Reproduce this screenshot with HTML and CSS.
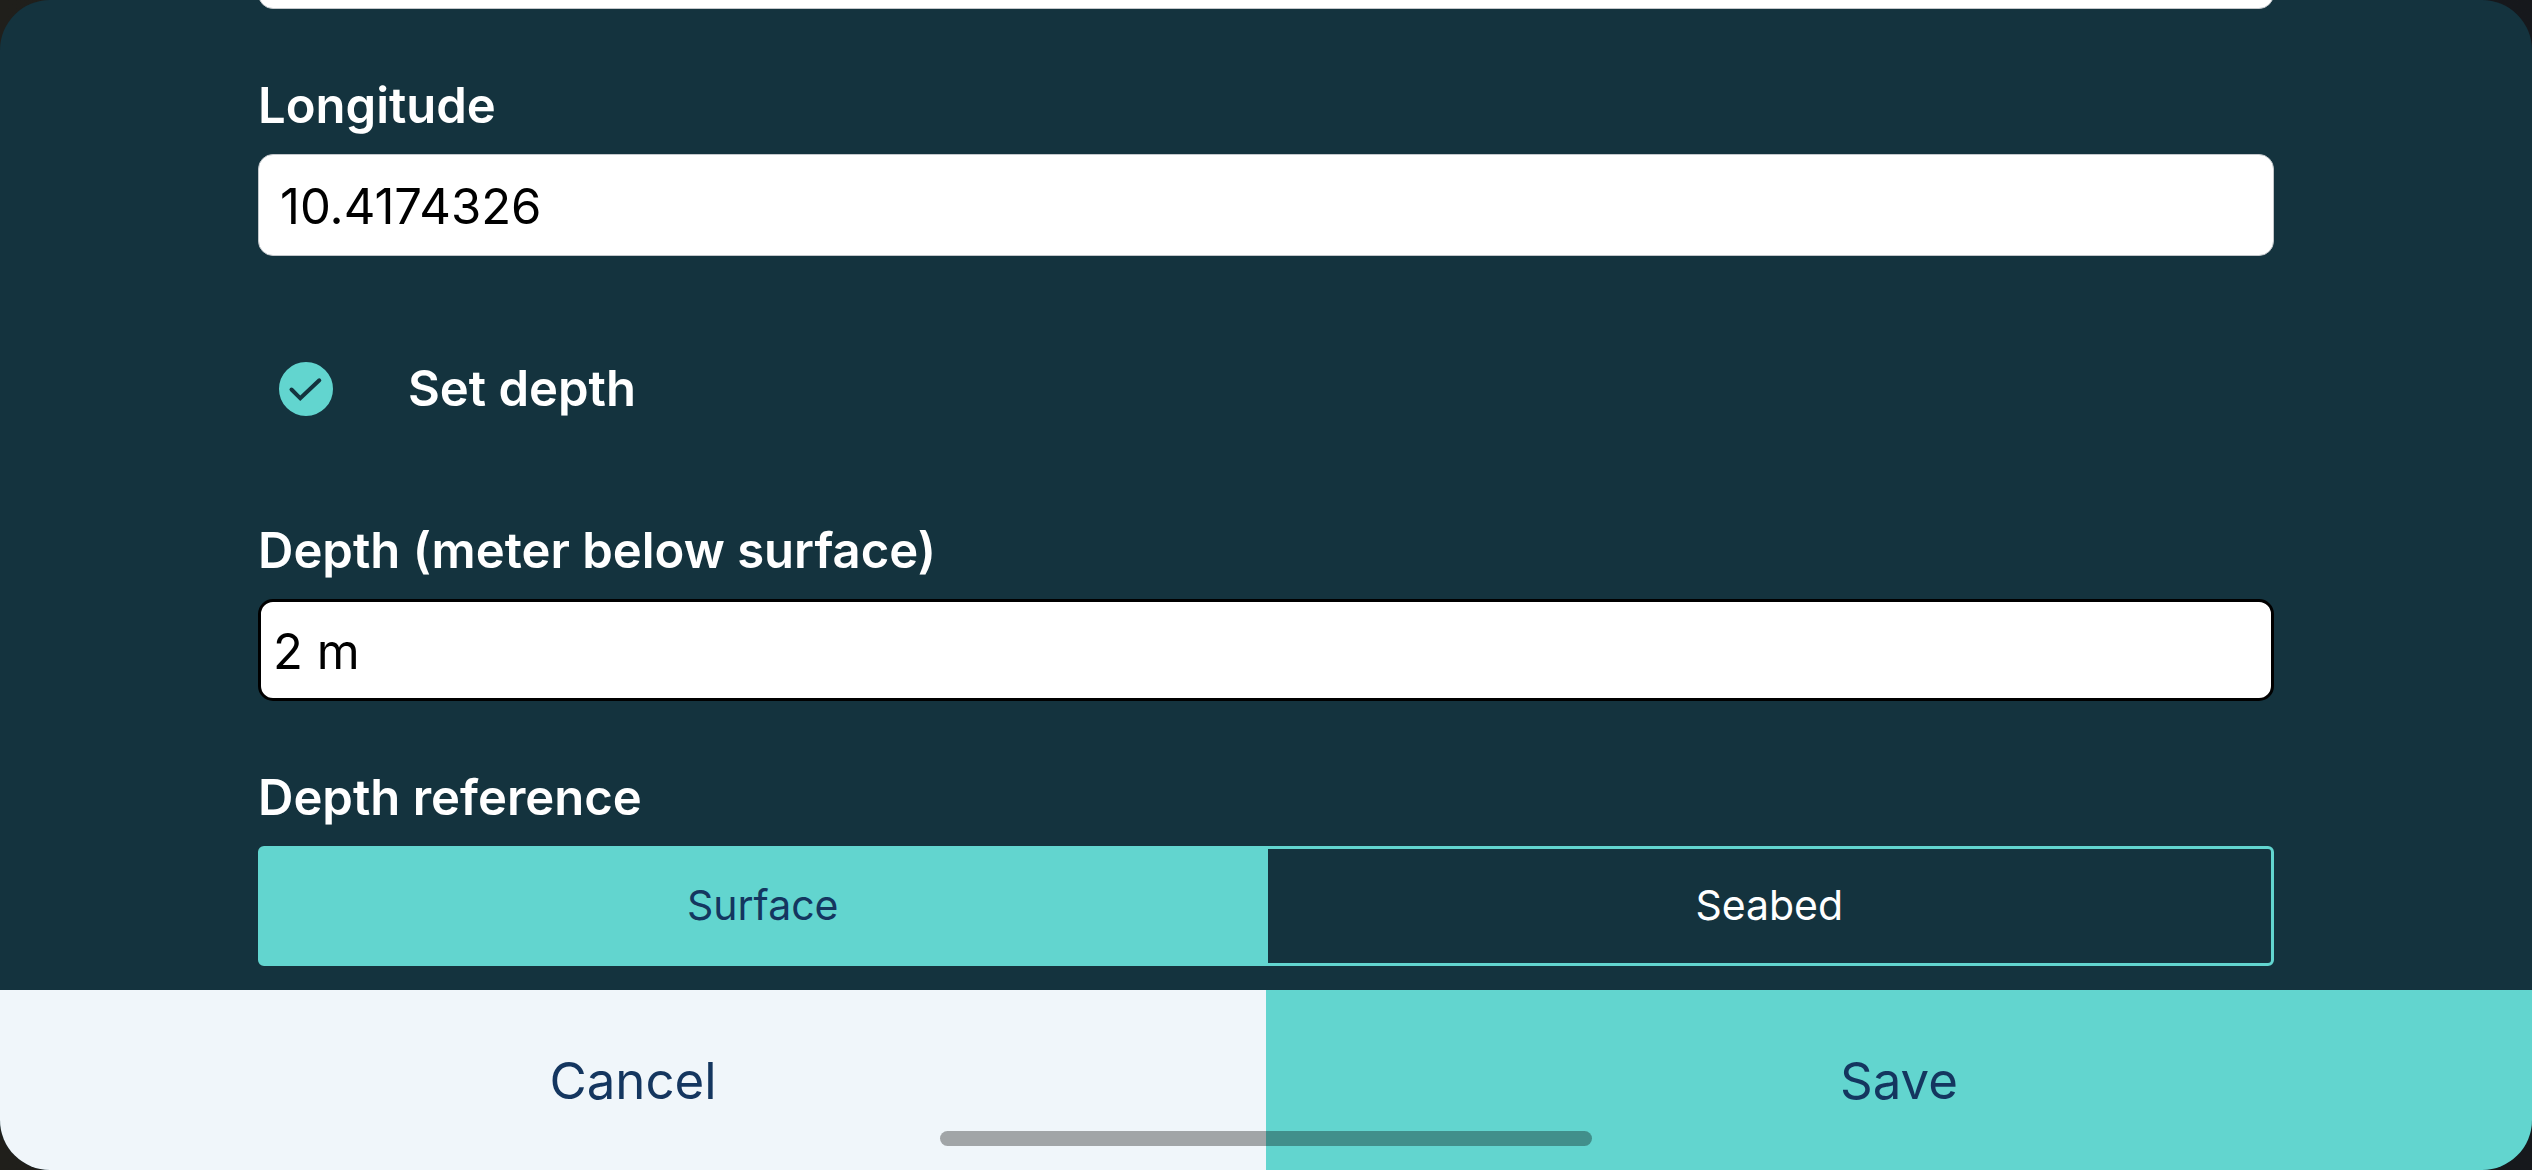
FILE: index.html
```html
<!DOCTYPE html>
<html lang="en">
<head>
    <meta charset="UTF-8">
    <meta name="viewport" content="width=device-width, initial-scale=1.0">
    <title>Position</title>
    <link rel="stylesheet" href="styles.css">
</head>
<body>

<form class="screen">
    <div class="content">
        <div class="field">
            <input type="text" id="latitude" class="text-input" aria-label="Latitude">
        </div>

        <div class="field">
            <label class="label" for="longitude">Longitude</label>
            <input type="text" id="longitude" class="text-input" value="10.4174326">
        </div>

        <div class="field check-row">
            <span class="check">
                <input type="checkbox" id="set-depth" class="check-input" checked>
                <svg class="check-icon" viewBox="0 0 54 54" aria-hidden="true">
                    <path d="M12.5 27.5 L21.3 36.3 L40.3 18.3"/>
                </svg>
            </span>
            <label class="label" for="set-depth">Set depth</label>
        </div>

        <div class="field">
            <label class="label" for="depth">Depth (meter below surface)</label>
            <input type="text" id="depth" class="text-input outlined" value="2 m">
        </div>

        <div class="field" role="radiogroup" aria-labelledby="reference-label">
            <span class="label" id="reference-label">Depth reference</span>
            <div class="segments">
                <label class="segment">
                    <input type="radio" name="reference" class="segment-input" checked>
                    <span>Surface</span>
                </label>
                <label class="segment">
                    <input type="radio" name="reference" class="segment-input">
                    <span>Seabed</span>
                </label>
            </div>
        </div>
    </div>

    <div class="actions">
        <button type="button" class="action cancel">Cancel</button>
        <button type="submit" class="action save">Save</button>
        <div class="home-indicator"></div>
    </div>
</form>

</body>
</html>
```
FILE: styles.css
```css
* {
    box-sizing: border-box;
}
body {
    margin: 0;
    background: linear-gradient(90deg, #201f1b, #16181c);
    font-family: Inter, "Liberation Sans", sans-serif;
}
.screen {
    display: flex;
    flex-direction: column;
    height: 100vh;
    border-radius: 50px;
    background-color: #14333e;
    overflow: hidden;
}

/* scrolled to the end, so the fields sit against the action bar */
.content {
    flex: 1;
    min-height: 0;
    display: flex;
    flex-direction: column;
    justify-content: flex-end;
    gap: 67px;
    padding: 0 258px 24px;
    overflow: hidden;
}
.field {
    display: flex;
    flex-direction: column;
    flex-shrink: 0;
    gap: 18px;
}
.label {
    color: white;
    font-size: 49px;
    font-weight: 600;
    line-height: 60px;
}
.text-input {
    width: 100%;
    height: 102px;
    padding: 2px 21px 0;
    border: 1px solid #c3c7cb;
    border-radius: 15px;
    background-color: white;
    color: black;
    font-family: inherit;
    font-size: 49px;
}
.text-input.outlined {
    padding: 2px 12px 0;
    border: 3px solid black;
}

.check-row {
    flex-direction: row;
    align-items: center;
    gap: 75px;
    height: 131px;
    padding-left: 21px;
}
.check {
    position: relative;
    width: 54px;
    height: 54px;
}
.check-input {
    appearance: none;
    display: block;
    width: 100%;
    height: 100%;
    margin: 0;
    border: 3px solid #62d5cf;
    border-radius: 50%;
}
.check-input:checked {
    background-color: #62d5cf;
}
.check-icon {
    position: absolute;
    inset: 0;
    fill: none;
    stroke: #14333e;
    stroke-width: 4;
    stroke-linecap: round;
    pointer-events: none;
}
.check-input:not(:checked) + .check-icon {
    display: none;
}

.segments {
    display: flex;
    height: 120px;
    border: 3px solid #62d5cf;
    border-radius: 6px;
}
.segment {
    position: relative;
    flex: 1;
    display: flex;
    align-items: center;
    justify-content: center;
    padding-bottom: 2px;
    color: white;
    font-size: 41px;
}
.segment + .segment {
    border-left: 3px solid #62d5cf;
}
.segment:has(:checked) {
    background-color: #62d5cf;
    color: #14365f;
}
.segment-input {
    position: absolute;
    inset: 0;
    margin: 0;
    opacity: 0;
}

.actions {
    position: relative;
    display: flex;
    height: 180px;
}
.action {
    flex: 1;
    padding: 0;
    border: none;
    color: #14365f;
    font-family: inherit;
    font-size: 51px;
}
.cancel {
    background-color: #f0f6fa;
}
.save {
    background-color: #62d5cf;
}
.home-indicator {
    position: absolute;
    bottom: 24px;
    left: 50%;
    width: 652px;
    height: 15px;
    margin-left: -326px;
    border-radius: 8px;
    background-color: rgba(0, 0, 0, 0.33);
}
```
